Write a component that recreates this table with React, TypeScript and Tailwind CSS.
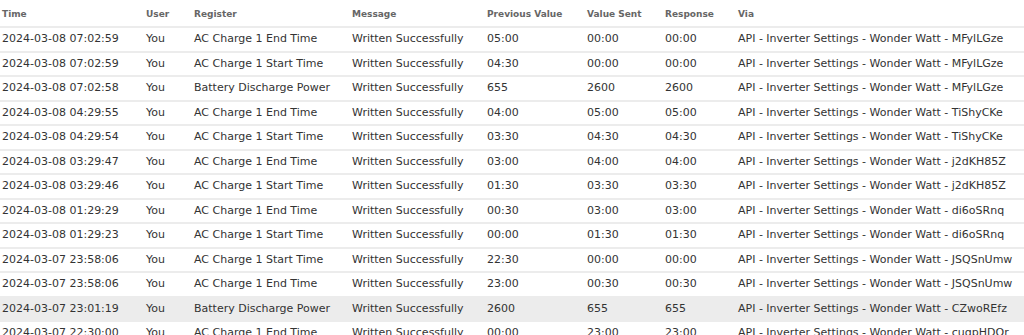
const rows = [
  ['2024-03-08 07:02:59', 'AC Charge 1 End Time', '05:00', '00:00', '00:00', 'MFylLGze'],
  ['2024-03-08 07:02:59', 'AC Charge 1 Start Time', '04:30', '00:00', '00:00', 'MFylLGze'],
  ['2024-03-08 07:02:58', 'Battery Discharge Power', '655', '2600', '2600', 'MFylLGze'],
  ['2024-03-08 04:29:55', 'AC Charge 1 End Time', '04:00', '05:00', '05:00', 'TiShyCKe'],
  ['2024-03-08 04:29:54', 'AC Charge 1 Start Time', '03:30', '04:30', '04:30', 'TiShyCKe'],
  ['2024-03-08 03:29:47', 'AC Charge 1 End Time', '03:00', '04:00', '04:00', 'j2dKH85Z'],
  ['2024-03-08 03:29:46', 'AC Charge 1 Start Time', '01:30', '03:30', '03:30', 'j2dKH85Z'],
  ['2024-03-08 01:29:29', 'AC Charge 1 End Time', '00:30', '03:00', '03:00', 'di6oSRnq'],
  ['2024-03-08 01:29:23', 'AC Charge 1 Start Time', '00:00', '01:30', '01:30', 'di6oSRnq'],
  ['2024-03-07 23:58:06', 'AC Charge 1 Start Time', '22:30', '00:00', '00:00', 'JSQSnUmw'],
  ['2024-03-07 23:58:06', 'AC Charge 1 End Time', '23:00', '00:30', '00:30', 'JSQSnUmw'],
  ['2024-03-07 23:01:19', 'Battery Discharge Power', '2600', '655', '655', 'CZwoREfz'],
  ['2024-03-07 22:30:00', 'AC Charge 1 End Time', '00:00', '23:00', '23:00', 'cuqpHDOr'],
]

export default function App() {
  return (
    <div className="w-[1024px] h-[335px] overflow-hidden bg-white font-['DejaVu_Sans',Verdana,sans-serif] text-[#333]">
      <table className="w-full table-fixed border-collapse">
        <colgroup>
          <col className="w-[144px]" />
          <col className="w-[48px]" />
          <col className="w-[158px]" />
          <col className="w-[135px]" />
          <col className="w-[100px]" />
          <col className="w-[78px]" />
          <col className="w-[73px]" />
          <col />
        </colgroup>
        <thead>
          <tr className="h-[27px] border-b-2 border-[#ececec] text-left text-[9px] font-bold text-[#666]">
            <th className="pl-[2px] pt-[4px] font-bold">Time</th>
            <th className="pl-[2px] pt-[4px] font-bold">User</th>
            <th className="pl-[2px] pt-[4px] font-bold">Register</th>
            <th className="pl-[2px] pt-[4px] font-bold">Message</th>
            <th className="pl-[2px] pt-[4px] font-bold">Previous Value</th>
            <th className="pl-[2px] pt-[4px] font-bold">Value Sent</th>
            <th className="pl-[2px] pt-[4px] font-bold">Response</th>
            <th className="pl-[2px] pt-[4px] font-bold">Via</th>
          </tr>
        </thead>
        <tbody className="text-[11px]">
          {rows.map((r, i) => (
            <tr
              key={i}
              className={`h-[24.5px] border-b-2 border-[#ececec] whitespace-nowrap ${i === 11 ? 'bg-[#ececec]' : ''}`}
            >
              <td className="pl-[2px]">{r[0]}</td>
              <td className="pl-[2px]">You</td>
              <td className="pl-[2px]">{r[1]}</td>
              <td className="pl-[2px]">Written Successfully</td>
              <td className="pl-[2px]">{r[2]}</td>
              <td className="pl-[2px]">{r[3]}</td>
              <td className="pl-[2px]">{r[4]}</td>
              <td className="pl-[2px]">API - Inverter Settings - Wonder Watt - {r[5]}</td>
            </tr>
          ))}
        </tbody>
      </table>
    </div>
  )
}
